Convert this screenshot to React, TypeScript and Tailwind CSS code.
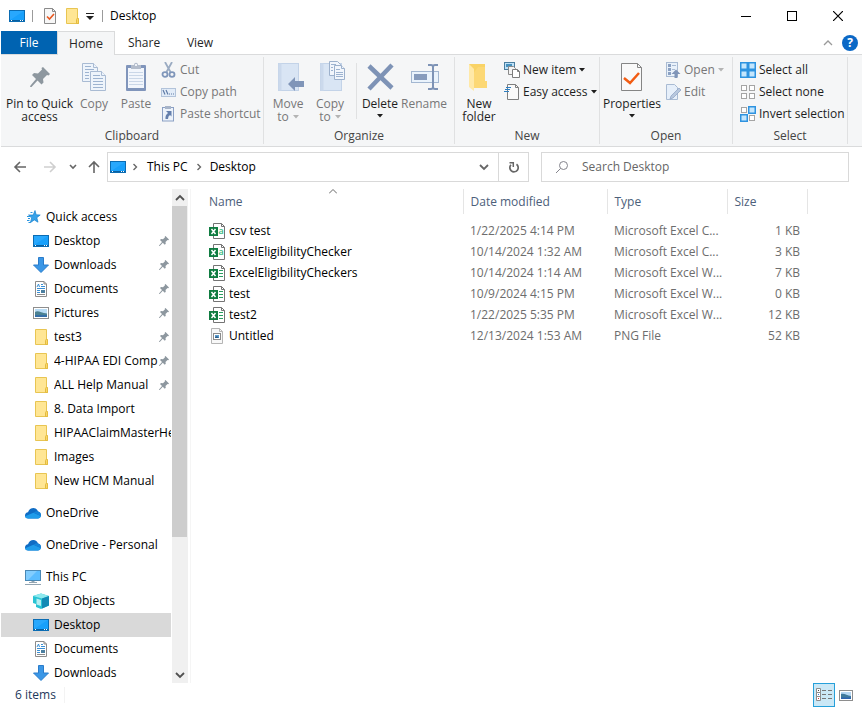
import { useState } from 'react';
import type { ReactNode } from 'react';

type IconProps = { className?: string };

const DesktopIcon = () => (
  <svg width="16" height="16" viewBox="0 0 16 16" className="shrink-0">
    <rect x="0.5" y="2.5" width="15" height="11" fill="#18a0fb" stroke="#0b6cb3" />
    <path d="M1 3h14L1 12z" fill="#33adff" opacity=".6" />
    <path d="M1 12.500h14" stroke="#0a5f9e" />
    <path d="M2 12.500h1M11 12.500h1M13 12.500h1" stroke="#fff" />
  </svg>
);

const FolderIcon = () => (
  <svg width="16" height="16" viewBox="0 0 16 16" className="shrink-0">
    <path d="M2.500 .5h11v10h1v5h-12z" fill="#ffe694" stroke="#e8c552" />
    <path d="M12.500 15.500v-4l1-1.500 1 1v4.500z" fill="#fbd867" stroke="#e3bb41" />
  </svg>
);

const CheckDocIcon = () => (
  <svg width="16" height="16" viewBox="0 0 16 16" className="shrink-0">
    <path d="M2.500 .5h8l3 3v12h-11z" fill="#f7f7f7" stroke="#8a8a8a" />
    <path d="M10.500 .5v3h3" fill="none" stroke="#8a8a8a" />
    <path d="M5 8.500l2.500 2.500 4.500-5" fill="none" stroke="#e8571f" strokeWidth="1.6" />
  </svg>
);

const DownloadsIcon = () => (
  <svg width="16" height="16" viewBox="0 0 16 16" className="shrink-0">
    <path d="M5.500 .5h5v7.500h5L8 15.500.5 8h5z" fill="#3b97e6" stroke="#2a7ccb" />
  </svg>
);

const DocumentsIcon = () => (
  <svg width="16" height="16" viewBox="0 0 16 16" className="shrink-0">
    <path d="M2.500 .5h8.500l2.500 2.500v12.500h-11z" fill="#fff" stroke="#8c8c8c" />
    <path d="M11 .5v2.500h2.500" fill="none" stroke="#8c8c8c" />
    <path d="M4 6l1.500-3 1 3M8 3.500h2M8 5.500h4M4 7.500h8M4 9.500h3M4 11.500h3" fill="none" stroke="#3a8fd4" />
    <path d="M4 13.500h8" stroke="#8c8c8c" />
    <rect x="8" y="9" width="4" height="3" fill="#4b7fa0" />
  </svg>
);

const PicturesIcon = () => (
  <svg width="16" height="16" viewBox="0 0 16 16" className="shrink-0">
    <rect x=".5" y="2.500" width="15" height="11" fill="#fff" stroke="#8e8e8e" />
    <rect x="2" y="4" width="12" height="8" fill="#b9dcf5" />
    <path d="M2 7c3-2 6 1 12 1.500V10H2z" fill="#4c8292" />
    <path d="M2 10h12v2H2z" fill="#356fa8" />
  </svg>
);

const StarIcon = () => (
  <svg width="16" height="16" viewBox="0 0 16 16" className="shrink-0">
    <path d="M10 1.500l1.200 4.300 4 .2-3.400 2.700 1.200 4.500-3.700-2.300-4 2.800 1.400-4.700L3.500 6h4.700z" fill="#37a2e9" stroke="#1782cf" strokeWidth=".7" />
    <path d="M5.500 3.500h2M2 7.500h3M3 9.500h2M2 11.500h2.500M3.500 13.500h2" stroke="#2a95e0" />
  </svg>
);

const CloudIcon = () => (
  <svg width="16" height="16" viewBox="0 0 16 16" className="shrink-0">
    <path d="M3.200 13.500C1.300 13.500 0 12 0 10.400c0-1.800 1.300-3 3-3.200C3.800 4.500 6 3 8.300 3c2.300 0 4 1.400 4.700 3.400 1.900.3 3 1.900 3 3.700 0 2-1.400 3.400-3.200 3.400z" fill="#0f6cc4" />
    <path d="M3.200 13.500C1.500 13.500.3 12.500 0 11.200L8.500 7.800l7.400 3.200c-.4 1.500-1.600 2.500-3.100 2.500z" fill="#1f9cea" />
    <path d="M13 6.400c1.900.3 3 1.900 3 3.700l-.1.900L8.500 7.800c1-1 2.700-1.700 4.500-1.400z" fill="#1583d8" />
  </svg>
);

const PcIcon = () => (
  <svg width="16" height="16" viewBox="0 0 16 16" className="shrink-0">
    <rect x=".5" y="1.500" width="15" height="10" fill="#5bbcff" stroke="#4a88b5" />
    <path d="M1 2h11L3 11H1z" fill="#93d4ff" opacity=".7" />
    <path d="M6.500 12.500h3M4 13.500h8M0 15.500h16" stroke="#93a5b2" />
  </svg>
);

const CubeIcon = () => (
  <svg width="16" height="16" viewBox="0 0 16 16" className="shrink-0">
    <path d="M0 3L8 .5 16 3v9.500L8 16l-5-2V11l-3-1z" fill="#28c3d3" />
    <path d="M0 3L8 .5 16 3 9 5.500z" fill="#8ee9ee" />
    <path d="M9 5.500L16 3v9.500L9 15.500z" fill="#128ab5" />
    <path d="M3.500 5.500L8 7v6l-4.500-1.500z" fill="#d8fafa" opacity=".8" />
  </svg>
);

const PinIcon = ({ className = 'h-3 w-3' }: IconProps) => (
  <svg viewBox="0 0 20 20" className={`shrink-0 ${className}`}>
    <path d="M13 0l7 7-1.500 1.500-1.500-.5-4 4 .5 3.500-2 2-4-4L1.500 20 0 20l.5-1.500L6 12 2 8l2-2 4 .5 4-4-.5-1.500z" fill="#8d979f" />
  </svg>
);

function ExcelIcon({ csv }: { csv?: boolean }) {
  return (
    <svg width="16" height="16" viewBox="0 0 16 16" className="shrink-0">
      <path d="M4.500 .5h8l3 3v12h-11z" fill="#fff" stroke="#747474" />
      <path d="M12.500 .5v3h3" fill="none" stroke="#747474" />
      {csv ? (
        <text x="9.500" y="11" fontSize="9" fontWeight="600" fill="#35b87b" fontFamily="Open Sans">a</text>
      ) : (
        <path d="M10 5.500h4M10 8.500h4M10 11.500h4" stroke="#2c9d62" strokeWidth="1.200" />
      )}
      <rect y="4" width="9" height="9" fill="#107c41" />
      <path d="M2.500 6l4 5M6.500 6l-4 5" stroke="#fff" strokeWidth="1.500" />
    </svg>
  );
}

const ImageFileIcon = () => (
  <svg width="16" height="16" viewBox="0 0 16 16" className="shrink-0">
    <path d="M2.500 .5h8l3 3v12h-11z" fill="#f8f8f8" stroke="#b5b5b5" />
    <path d="M10.500 .5v3h3" fill="none" stroke="#b5b5b5" />
    <rect x="4.500" y="5.500" width="7" height="6" fill="#fff" stroke="#8b8b8b" />
    <path d="M6 7h4v3H6z" fill="#5c9ed0" />
    <path d="M6 9l2-1 2 2H6z" fill="#2f5f8a" />
  </svg>
);

const CopyIcon = () => (
  <svg width="32" height="32" viewBox="0 0 32 32">
    <g fill="#eef4fb" stroke="#a9bbd3">
      <path d="M4.500 2.500h11l4 4v14h-15z" />
      <path d="M15.500 2.500v4h4" />
      <path d="M12.500 10.500h11l4 4v15h-15z" />
      <path d="M23.500 10.500v4h4" />
    </g>
    <path d="M7 5.500h6M7 8.500h9M7 11.500h4M7 14.500h4M7 17.500h4M15 14.500h7M15 17.500h10M15 20.500h10M15 23.500h10M15 26.500h10" stroke="#9db3d0" />
  </svg>
);

const PasteIcon = () => (
  <svg width="32" height="32" viewBox="0 0 32 32">
    <rect x="6" y="4" width="20" height="26" rx="1" fill="#8095bb" />
    <rect x="8" y="7" width="16" height="20" fill="#f2f6fc" />
    <path d="M9 11.500h14M9 14.500h14M9 17.500h14M9 20.500h14M9 23.500h14" stroke="#cad7e8" />
    <path d="M11 4h3c0-3 4-3 4 0h3v4H11z" fill="#b3bccb" />
    <path d="M15 3h2v2h-2z" fill="#eef2f7" />
  </svg>
);

const MoveToIcon = () => (
  <svg width="32" height="32" viewBox="0 0 32 32">
    <rect x="6.500" y="2.500" width="20" height="27" fill="#d9e5f4" stroke="#c3d3e8" />
    <path d="M6.500 2.500h3v27h-3z" fill="#cbd9ec" />
    <path d="M16 23l7-7v4h9v6h-9v4z" fill="#8095b8" />
  </svg>
);

const CopyToIcon = () => (
  <svg width="32" height="32" viewBox="0 0 32 32">
    <rect x="6.500" y="2.500" width="21" height="27" fill="#d9e5f4" stroke="#c3d3e8" />
    <path d="M6.500 2.500h3v27h-3z" fill="#cbd9ec" />
    <g fill="#f2f6fc" stroke="#9db1cc">
      <path d="M15.500 .5h8l3 3v11h-11z" />
      <path d="M20.500 4.500h7l3 3v11h-10z" />
      <path d="M27.500 4.500v3h3" />
    </g>
    <path d="M17 3.500h5M17 6.500h2M17 9.500h2M22 8.500h4M22 11.500h7M22 13.500h7M22 15.500h7" stroke="#9db3d0" />
  </svg>
);

const DeleteIcon = () => (
  <svg width="32" height="32" viewBox="0 0 32 32">
    <path d="M5 5l23 22M28 4L5 28" stroke="#7e93b6" strokeWidth="4.500" />
  </svg>
);

const RenameIcon = () => (
  <svg width="32" height="32" viewBox="0 0 32 32">
    <rect x="3.500" y="10.500" width="27" height="11" fill="#eaf3fc" stroke="#a3b7d1" />
    <rect x="6" y="13" width="13" height="6" fill="#879cbd" />
    <path d="M20 4h3q2 0 2 2 0-2 2-2h3M20 28h3q2 0 2-2 0 2 2 2h3" fill="none" stroke="#7e93b6" strokeWidth="2" />
    <path d="M25 4v24" stroke="#7e93b6" strokeWidth="2" />
  </svg>
);

const NewFolderIcon = () => (
  <svg width="32" height="32" viewBox="0 0 32 32">
    <path d="M6 3h16v17h2v7H10z" fill="#f9d366" />
    <path d="M10 27V13l5-7h7v14h2v7z" fill="#fcd875" />
    <path d="M6 3l5 5v22l-5-4z" fill="#ffe9a8" />
  </svg>
);

const PropertiesIcon = () => (
  <svg width="32" height="32" viewBox="0 0 32 32">
    <path d="M5.500 2.500h16l4 4v23h-20z" fill="#f9f9f9" stroke="#858585" />
    <path d="M21.500 2.500v4h4" fill="none" stroke="#858585" />
    <path d="M8 17l6 5 9-10" fill="none" stroke="#f25c13" strokeWidth="2.500" />
  </svg>
);

const CutIcon = () => (
  <svg width="16" height="16" viewBox="0 0 16 16" className="shrink-0">
    <path d="M4 0l5.500 10M11 0L5.500 10" stroke="#9aabc2" strokeWidth="1.800" />
    <ellipse cx="4" cy="12.500" rx="2.500" ry="2.300" fill="none" stroke="#7f96ba" strokeWidth="1.800" />
    <ellipse cx="11" cy="12.500" rx="2.500" ry="2.300" fill="none" stroke="#7f96ba" strokeWidth="1.800" />
  </svg>
);

const CopyPathIcon = () => (
  <svg width="16" height="16" viewBox="0 0 16 16" className="shrink-0">
    <rect x=".5" y="4.500" width="14" height="8" fill="#e2ecf8" stroke="#b2c3da" />
    <path d="M2 6l2 4.500M5 6l2 4.500" stroke="#5f7ba6" strokeWidth="1.200" />
    <path d="M8 10h1M10 10h1M12 10h1" stroke="#5f7ba6" strokeWidth="1.200" />
  </svg>
);

const PasteShortcutIcon = () => (
  <svg width="16" height="16" viewBox="0 0 16 16" className="shrink-0">
    <rect x="1.500" y="1.500" width="11" height="13.500" fill="#edf3fb" stroke="#8ba0c4" />
    <rect x="4" y="0" width="6" height="3" fill="#a7b4c9" />
    <path d="M5 5h5.500v5.500L9 9q-2 1-2 4H4.500Q4 9 7 7z" fill="#6580ad" />
  </svg>
);

const NewItemIcon = () => (
  <svg width="16" height="16" viewBox="0 0 16 16" className="shrink-0">
    <rect x=".5" y=".5" width="10" height="7" fill="#bfe1f7" stroke="#4a7e9f" />
    <path d="M2 2h6v3H2z" fill="#4591bf" />
    <path d="M4.500 4.500h5l2 2v6h-7z" fill="#f3f3f3" stroke="#8a8a8a" />
    <path d="M8.500 7.500h5l2 2v6h-7z" fill="#fff" stroke="#7c7c7c" />
    <path d="M13.500 7.500v2h2" fill="none" stroke="#7c7c7c" />
  </svg>
);

const EasyAccessIcon = () => (
  <svg width="16" height="16" viewBox="0 0 16 16" className="shrink-0">
    <path d="M3.500 .5h8l3 3v12h-11z" fill="#fafafa" stroke="#7f7f7f" />
    <path d="M11.500 .5v3h3" fill="none" stroke="#7f7f7f" />
    <path d="M2 3.500h5M1 5.500h5M0 7.500h5" stroke="#2f7fc1" strokeWidth="1.200" />
  </svg>
);

const OpenIcon = () => (
  <svg width="16" height="16" viewBox="0 0 16 16" className="shrink-0">
    <rect x="1.500" y=".5" width="11" height="14" fill="#e9f1fa" stroke="#a9bbd3" />
    <path d="M3 2h3v3H3zM3 6h3v3H3zM3 10h3v3H3z" fill="#8ba1c3" />
    <path d="M7 3.500h4M7 7.500h3" stroke="#a9bbd3" />
    <path d="M6.500 12L11 7.500l4.500 4.500h-3v4h-3v-4z" fill="#8095b8" />
  </svg>
);

const EditIcon = () => (
  <svg width="16" height="16" viewBox="0 0 16 16" className="shrink-0">
    <path d="M1.500 .5h8l3 3v12h-11z" fill="#e6effa" stroke="#a9bbd3" />
    <path d="M5 15l1-3 8-8 2 2-8 8z" fill="#b8c8de" stroke="#8ba1c3" strokeWidth=".7" />
  </svg>
);

// filled holds the indexes of the highlighted squares, left to right and top to bottom
function SelectIcon({ filled }: { filled: number[] }) {
  return (
    <svg width="16" height="16" viewBox="0 0 16 16" className="shrink-0">
      {[0, 1, 2, 3].map((i) => {
        const x = (i % 2) * 8;
        const y = i > 1 ? 8 : 0;
        return filled.includes(i) ? (
          <rect key={i} x={x + 0.75} y={y + 0.75} width="6.500" height="6.500" fill="#c4e6fd" stroke="#2e93e0" strokeWidth="1.500" />
        ) : (
          <rect key={i} x={x + 1.5} y={y + 1.5} width="5" height="5" fill="#fff" stroke="#a5a5a5" />
        );
      })}
    </svg>
  );
}

const Caret = ({ className = '' }: IconProps) => (
  <svg width="6" height="4" viewBox="0 0 6 4" className={`shrink-0 ${className}`}>
    <path d="M0 0h6L3 3.500z" fill="currentColor" />
  </svg>
);

const Chevron = ({ className = '' }: IconProps) => (
  <svg width="10" height="10" viewBox="0 0 10 10" className={`shrink-0 ${className}`}>
    <path d="M1 3l4 4 4-4" fill="none" stroke="currentColor" strokeWidth="1.800" />
  </svg>
);

type RibbonButtonProps = {
  icon: ReactNode;
  lines: string[];
  width: string;
  menu?: boolean;
  disabled?: boolean;
};

function RibbonButton({ icon, lines, width, menu, disabled }: RibbonButtonProps) {
  return (
    <button
      disabled={disabled}
      className={`flex shrink-0 flex-col items-center whitespace-nowrap pt-[2px] leading-[13px] ${width} ${disabled ? 'text-[#777777]' : 'text-[#1e1e1e]'}`}
    >
      <span className="mb-1 flex h-8 items-center justify-center">{icon}</span>
      {lines.map((line, idx) => (
        <span key={line} className="flex items-center gap-1">
          {line}
          {menu && lines.length > 1 && idx === lines.length - 1 && <Caret className={disabled ? 'text-[#b4b4b4]' : ''} />}
        </span>
      ))}
      {menu && lines.length === 1 && <span className="pt-1"><Caret /></span>}
    </button>
  );
}

type SmallButtonProps = { icon: ReactNode; label: string; menu?: boolean; disabled?: boolean };

function SmallButton({ icon, label, menu, disabled }: SmallButtonProps) {
  return (
    <button
      disabled={disabled}
      className={`flex h-[22px] items-center gap-[3px] whitespace-nowrap px-[2px] ${disabled ? 'text-[#777777]' : 'text-[#1e1e1e]'}`}
    >
      {icon}
      {label}
      {menu && <Caret className={disabled ? 'text-[#b4b4b4]' : ''} />}
    </button>
  );
}

function RibbonGroup({ title, width, children }: { title: string; width: string; children: ReactNode }) {
  return (
    <section className={`my-[2px] flex shrink-0 flex-col border-r border-[#e0e1e2] ${width}`}>
      <div className="flex h-[72px] pt-[2px] pl-[3px]">{children}</div>
      <h2 className="text-center leading-4 text-[#444444]">{title}</h2>
    </section>
  );
}

type NavItem = {
  label: string;
  icon: ReactNode;
  root?: boolean;
  pinned?: boolean;
  selected?: boolean;
};

const navSections: NavItem[][] = [
  [
    { label: 'Quick access', icon: <StarIcon />, root: true },
    { label: 'Desktop', icon: <DesktopIcon />, pinned: true },
    { label: 'Downloads', icon: <DownloadsIcon />, pinned: true },
    { label: 'Documents', icon: <DocumentsIcon />, pinned: true },
    { label: 'Pictures', icon: <PicturesIcon />, pinned: true },
    { label: 'test3', icon: <FolderIcon />, pinned: true },
    { label: '4-HIPAA EDI Comp', icon: <FolderIcon />, pinned: true },
    { label: 'ALL Help Manual', icon: <FolderIcon />, pinned: true },
    { label: '8. Data Import', icon: <FolderIcon /> },
    { label: 'HIPAAClaimMasterHe', icon: <FolderIcon /> },
    { label: 'Images', icon: <FolderIcon /> },
    { label: 'New HCM Manual', icon: <FolderIcon /> }
  ],
  [{ label: 'OneDrive', icon: <CloudIcon />, root: true }],
  [{ label: 'OneDrive - Personal', icon: <CloudIcon />, root: true }],
  [
    { label: 'This PC', icon: <PcIcon />, root: true },
    { label: '3D Objects', icon: <CubeIcon /> },
    { label: 'Desktop', icon: <DesktopIcon />, selected: true },
    { label: 'Documents', icon: <DocumentsIcon /> },
    { label: 'Downloads', icon: <DownloadsIcon /> }
  ]
];

const files = [
  { name: 'csv test', date: '1/22/2025 4:14 PM', type: 'Microsoft Excel C...', size: '1 KB', icon: <ExcelIcon csv /> },
  { name: 'ExcelEligibilityChecker', date: '10/14/2024 1:32 AM', type: 'Microsoft Excel C...', size: '3 KB', icon: <ExcelIcon csv /> },
  { name: 'ExcelEligibilityCheckers', date: '10/14/2024 1:14 AM', type: 'Microsoft Excel W...', size: '7 KB', icon: <ExcelIcon /> },
  { name: 'test', date: '10/9/2024 4:15 PM', type: 'Microsoft Excel W...', size: '0 KB', icon: <ExcelIcon /> },
  { name: 'test2', date: '1/22/2025 5:35 PM', type: 'Microsoft Excel W...', size: '12 KB', icon: <ExcelIcon /> },
  { name: 'Untitled', date: '12/13/2024 1:53 AM', type: 'PNG File', size: '52 KB', icon: <ImageFileIcon /> }
];

function TitleBar() {
  return (
    <header className="flex h-[31px] shrink-0 items-center pl-2 pr-px">
      <DesktopIcon />
      <span className="ml-[7px] h-3 w-px bg-[#9b9b9b]" />
      <button aria-label="Properties" className="ml-[9px]"><CheckDocIcon /></button>
      <button aria-label="New folder" className="ml-[6px]"><FolderIcon /></button>
      <button aria-label="Customize Quick Access Toolbar" className="ml-[2px] px-1">
        <svg width="8" height="8" viewBox="0 0 8 8">
          <path d="M0 1.500h8" stroke="#222" />
          <path d="M0 4h8L4 8z" fill="#222" />
        </svg>
      </button>
      <span className="ml-1 h-3 w-px bg-[#9b9b9b]" />
      <h1 className="ml-[7px] flex-1">Desktop</h1>
      <button aria-label="Minimize" className="flex h-full w-[46px] items-center justify-center">
        <svg width="10" height="10"><path d="M0 5.500h10" stroke="#000" /></svg>
      </button>
      <button aria-label="Maximize" className="flex h-full w-[46px] items-center justify-center">
        <svg width="10" height="10"><rect x=".5" y=".5" width="9" height="9" fill="none" stroke="#000" /></svg>
      </button>
      <button aria-label="Close" className="flex h-full w-[46px] items-center justify-center">
        <svg width="10" height="10"><path d="M0 0l10 10M10 0L0 10" stroke="#000" strokeWidth="1.200" /></svg>
      </button>
    </header>
  );
}

function Tabs() {
  return (
    <nav className="flex h-[23px] shrink-0 text-[#262626]">
      <button className="w-14 bg-[#0063b1] text-white">File</button>
      <button className="relative -mb-px w-[58px] border border-b-0 border-[#dadbdc] bg-[#f5f6f7]">Home</button>
      <button className="w-[58px]">Share</button>
      <button className="w-[54px]">View</button>
      <div className="ml-auto flex items-center gap-[9px] pr-[4px]">
        <button aria-label="Minimize the Ribbon" className="text-[#9a9a9a]">
          <svg width="10" height="10"><path d="M1 7l4-4 4 4" fill="none" stroke="currentColor" strokeWidth="1.300" /></svg>
        </button>
        <button className="flex h-4 w-4 items-center justify-center rounded-full bg-[#0b68c6] text-[12px] font-bold text-white">?</button>
      </div>
    </nav>
  );
}

function Ribbon() {
  return (
    <div className="flex h-[93px] shrink-0 overflow-hidden border-y border-[#dadbdc] bg-[#f5f6f7]">
      <RibbonGroup title="Clipboard" width="w-[263px]">
        <RibbonButton icon={<PinIcon className="h-5 w-5" />} lines={['Pin to Quick', 'access']} width="w-[71px]" />
        <RibbonButton icon={<CopyIcon />} lines={['Copy']} width="w-[38px]" disabled />
        <RibbonButton icon={<PasteIcon />} lines={['Paste']} width="w-[46px]" disabled />
        <div>
          <SmallButton icon={<CutIcon />} label="Cut" disabled />
          <SmallButton icon={<CopyPathIcon />} label="Copy path" disabled />
          <SmallButton icon={<PasteShortcutIcon />} label="Paste shortcut" disabled />
        </div>
      </RibbonGroup>
      <RibbonGroup title="Organize" width="w-[191px]">
        <RibbonButton icon={<MoveToIcon />} lines={['Move', 'to']} width="w-[42px]" menu disabled />
        <RibbonButton icon={<CopyToIcon />} lines={['Copy', 'to']} width="w-[42px]" menu disabled />
        <span className="ml-[5px] mr-[2px] mt-1 h-14 w-px bg-[#e0e1e2]" />
        <RibbonButton icon={<DeleteIcon />} lines={['Delete']} width="w-[42px]" menu />
        <RibbonButton icon={<RenameIcon />} lines={['Rename']} width="w-[46px]" disabled />
      </RibbonGroup>
      <RibbonGroup title="New" width="w-[145px]">
        <RibbonButton icon={<NewFolderIcon />} lines={['New', 'folder']} width="w-[42px]" />
        <div className="pl-[2px]">
          <SmallButton icon={<NewItemIcon />} label="New item" menu />
          <SmallButton icon={<EasyAccessIcon />} label="Easy access" menu />
        </div>
      </RibbonGroup>
      <RibbonGroup title="Open" width="w-[133px]">
        <RibbonButton icon={<PropertiesIcon />} lines={['Properties']} width="w-[58px]" menu />
        <div className="pl-[2px]">
          <SmallButton icon={<OpenIcon />} label="Open" menu disabled />
          <SmallButton icon={<EditIcon />} label="Edit" disabled />
        </div>
      </RibbonGroup>
      <RibbonGroup title="Select" width="w-[115px]">
        <div className="pl-[2px]">
          <SmallButton icon={<SelectIcon filled={[0, 1, 2, 3]} />} label="Select all" />
          <SmallButton icon={<SelectIcon filled={[]} />} label="Select none" />
          <SmallButton icon={<SelectIcon filled={[1, 2]} />} label="Invert selection" />
        </div>
      </RibbonGroup>
    </div>
  );
}

function AddressBar() {
  return (
    <div className="flex shrink-0 items-center py-[5px] pl-3 pr-[13px] text-[#666666]">
      <button aria-label="Back">
        <svg width="14" height="14" viewBox="0 0 14 14"><path d="M13 7H2M7 2L2 7l5 5" fill="none" stroke="currentColor" strokeWidth="1.600" /></svg>
      </button>
      <button aria-label="Forward" className="ml-4 text-[#cfcfcf]">
        <svg width="14" height="14" viewBox="0 0 14 14"><path d="M1 7h11M7 2l5 5-5 5" fill="none" stroke="currentColor" strokeWidth="1.600" /></svg>
      </button>
      <button aria-label="Recent locations" className="ml-3">
        <svg width="8" height="8" viewBox="0 0 8 8"><path d="M1 2l3 3 3-3" fill="none" stroke="currentColor" strokeWidth="1.600" /></svg>
      </button>
      <button aria-label="Up" className="ml-[10px] mr-[6px]">
        <svg width="14" height="14" viewBox="0 0 14 14"><path d="M7 13V2M2 7l5-5 5 5" fill="none" stroke="currentColor" strokeWidth="1.600" /></svg>
      </button>
      <div className="flex h-[30px] flex-1 items-center border border-[#d9d9d9] pl-[2px] text-black">
        <DesktopIcon />
        <Chevron className="ml-1 -rotate-90 scale-75 text-[#666666]" />
        <button className="ml-[7px]">This PC</button>
        <Chevron className="mx-[6px] -rotate-90 scale-75 text-[#666666]" />
        <button>Desktop</button>
        <button aria-label="Previous locations" className="ml-auto px-[9px] text-[#666666]"><Chevron /></button>
        <button aria-label="Refresh" className="flex h-full w-[30px] items-center justify-center border-l border-[#d9d9d9] text-[#666666]">
          <svg width="12" height="12" viewBox="0 0 12 12">
            <path d="M8.500 3.200a4.200 4.200 0 1 1-5.600.6" fill="none" stroke="currentColor" strokeWidth="1.700" />
            <path d="M1.500 1.700H5.300V6" fill="none" stroke="currentColor" strokeWidth="1.500" />
          </svg>
        </button>
      </div>
      <label className="ml-3 flex h-[30px] w-[308px] items-center border border-[#d9d9d9] pl-[13px]">
        <svg width="14" height="14" viewBox="0 0 14 14" className="shrink-0">
          <circle cx="8.500" cy="5.500" r="4" fill="none" stroke="#84848c" />
          <path d="M5.500 8.500L1 13" stroke="#84848c" />
        </svg>
        <input aria-label="Search Desktop" placeholder="Search Desktop" className="ml-[13px] min-w-0 flex-1 outline-none placeholder:text-[#666666]" />
      </label>
    </div>
  );
}

function NavigationPane() {
  return (
    <aside className="flex w-[187px] shrink-0">
      <div className="flex min-w-0 flex-1 flex-col gap-2 overflow-hidden pt-4 pr-px">
        {navSections.map((section) => (
          <ul key={section[0].label}>
            {section.map((item) => (
              <li key={item.label}>
                <a
                  href="#"
                  className={`flex h-6 items-center ${item.root ? 'pl-6' : 'pl-8'} ${item.selected ? 'bg-[#d9d9d9]' : ''}`}
                >
                  {item.icon}
                  <span className="ml-[5px] min-w-0 flex-1 overflow-hidden whitespace-nowrap">{item.label}</span>
                  {item.pinned && <PinIcon className="mr-[2px] h-[10px] w-[10px]" />}
                </a>
              </li>
            ))}
          </ul>
        ))}
      </div>
      <div className="flex w-4 shrink-0 flex-col bg-[#f0f0f0] text-[#505050]">
        <button aria-label="Scroll up" className="flex h-[17px] items-center justify-center pr-px"><Chevron className="rotate-180" /></button>
        <div className="min-h-0 flex-1 pr-px"><div className="h-[72%] bg-[#cdcdcd]" /></div>
        <button aria-label="Scroll down" className="flex h-[17px] items-center justify-center pr-px"><Chevron /></button>
      </div>
    </aside>
  );
}

function FileTable() {
  return (
    <main className="ml-[2px] min-w-0 flex-1 overflow-hidden border-l border-[#f5f5f5]">
      <table className="w-[616px] table-fixed text-left">
        <thead>
          <tr className="h-[25px] text-[#4c607a]">
            <th className="relative w-[272px] border-r border-[#e5e5e5] pl-[18px] font-normal">
              Name
              <svg width="8" height="5" viewBox="0 0 8 5" className="absolute top-0 left-[51%]">
                <path d="M0 4.500l4-4 4 4" fill="none" stroke="#666" />
              </svg>
            </th>
            <th className="w-36 border-r border-[#e5e5e5] pl-[7px] font-normal">Date modified</th>
            <th className="w-[120px] border-r border-[#e5e5e5] pl-[7px] font-normal">Type</th>
            <th className="w-20 border-r border-[#e5e5e5] pl-[7px] font-normal">Size</th>
          </tr>
        </thead>
        <tbody className="text-[#6d6d6d] before:block before:h-[6px]">
          {files.map((file) => (
            <tr key={file.name} className="h-[21px]">
              <td className="pl-[18px] text-black">
                <span className="flex items-center gap-1">{file.icon}{file.name}</span>
              </td>
              <td className="pl-[7px]">{file.date}</td>
              <td className="pl-[7px] whitespace-nowrap">{file.type}</td>
              <td className="pr-[7px] text-right">{file.size}</td>
            </tr>
          ))}
        </tbody>
      </table>
    </main>
  );
}

function StatusBar({ view, onViewChange }: { view: string; onViewChange: (view: string) => void }) {
  const active = 'border-[#26a0da] bg-[#cbe8f6]';
  return (
    <footer className="flex h-6 shrink-0 items-center pr-[5px] pl-[14px] text-[#1e395b]">
      <span className="mr-2">6 items</span>
      <span className="h-4 w-px bg-[#f3f3f3]" />
      <button
        aria-label="Details"
        onClick={() => onViewChange('details')}
        className={`ml-auto flex h-6 w-[22px] items-center justify-center border ${view === 'details' ? active : 'border-transparent'}`}
      >
        <svg width="16" height="14" viewBox="0 0 16 14">
          <path d="M.5 .5h4v4h-4zM.5 4.500h4v4h-4zM.5 8.500h4v4h-4z" fill="#fff" stroke="#8c8c8c" />
          <path d="M2 2h1v1H2z" fill="#444" />
          <path d="M2 6h1v1H2z" fill="#3b78d8" />
          <path d="M2 10h1v1H2z" fill="#d33" />
          <path d="M6 2.500h4M12 2.500h4M6 6.500h4M12 6.500h4M6 10.500h4M12 10.500h4" stroke="#777" />
        </svg>
      </button>
      <button
        aria-label="Large icons"
        onClick={() => onViewChange('icons')}
        className={`flex h-6 w-[22px] items-center justify-center border ${view === 'icons' ? active : 'border-transparent'}`}
      >
        <svg width="14" height="11" viewBox="0 0 14 11">
          <rect x=".5" y=".5" width="13" height="10" fill="#fff" stroke="#8e8e8e" />
          <rect x="2" y="2" width="10" height="7" fill="#b5d7f3" />
          <path d="M2 4c3-1 6 1.500 10 2v3H2z" fill="#3f7a9c" />
          <path d="M2 7.500h10V9H2z" fill="#2c63b0" />
        </svg>
      </button>
    </footer>
  );
}

export default function App() {
  const [view, setView] = useState('details');

  return (
    <div className="flex h-screen flex-col overflow-hidden bg-white pl-px font-['Open_Sans','Noto_Sans',sans-serif] text-[12px] leading-4 text-black">
      <TitleBar />
      <Tabs />
      <Ribbon />
      <AddressBar />
      <div className="flex min-h-0 flex-1 pt-[2px]">
        <NavigationPane />
        <FileTable />
      </div>
      <StatusBar view={view} onViewChange={setView} />
    </div>
  );
}
